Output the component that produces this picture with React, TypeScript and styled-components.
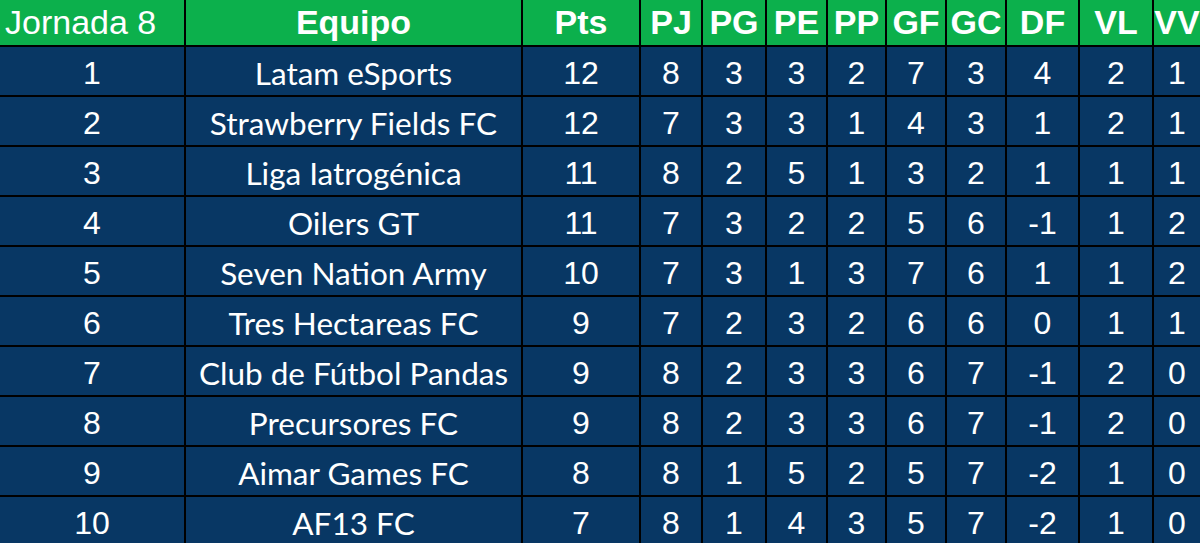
import * as React from 'react'
import styled, { createGlobalStyle } from 'styled-components';

const GlobalStyle = createGlobalStyle`
  html, body {
    margin: 0;
    padding: 0;
    overflow: hidden;
    background: #000;
  }
`

type Team = {
    pos: number
    name: string
    stats: number[] // Pts PJ PG PE PP GF GC DF VL VV
}

const teams: Team[] = [
    { pos: 1, name: 'Latam eSports', stats: [12, 8, 3, 3, 2, 7, 3, 4, 2, 1] },
    { pos: 2, name: 'Strawberry Fields FC', stats: [12, 7, 3, 3, 1, 4, 3, 1, 2, 1] },
    { pos: 3, name: 'Liga Iatrogénica', stats: [11, 8, 2, 5, 1, 3, 2, 1, 1, 1] },
    { pos: 4, name: 'Oilers GT', stats: [11, 7, 3, 2, 2, 5, 6, -1, 1, 2] },
    { pos: 5, name: 'Seven Nation Army', stats: [10, 7, 3, 1, 3, 7, 6, 1, 1, 2] },
    { pos: 6, name: 'Tres Hectareas FC', stats: [9, 7, 2, 3, 2, 6, 6, 0, 1, 1] },
    { pos: 7, name: 'Club de Fútbol Pandas', stats: [9, 8, 2, 3, 3, 6, 7, -1, 2, 0] },
    { pos: 8, name: 'Precursores FC', stats: [9, 8, 2, 3, 3, 6, 7, -1, 2, 0] },
    { pos: 9, name: 'Aimar Games FC', stats: [8, 8, 1, 5, 2, 5, 7, -2, 1, 0] },
    { pos: 10, name: 'AF13 FC', stats: [7, 8, 1, 4, 3, 5, 7, -2, 1, 0] },
]

const columns = ['Pts', 'PJ', 'PG', 'PE', 'PP', 'GF', 'GC', 'DF', 'VL', 'VV']

const Table = styled.div`
  display: grid;
  grid-template-columns: 184px 335px 116px 60px 62px 59px 57px 58px 58px 71px 72px 46px;
  grid-template-rows: 45px;
  grid-auto-rows: 48px;
  gap: 2px;
  width: 1200px;
  background: #000;
`

const HeadCell = styled.div<{ $left?: boolean; $regular?: boolean }>`
  background: #0cb04c;
  color: #fff;
  font-family: "Liberation Sans", Arial, sans-serif;
  font-size: 34px;
  font-weight: ${p => (p.$regular ? 400 : 700)};
  line-height: 45px;
  white-space: nowrap;
  text-align: ${p => (p.$left ? 'left' : 'center')};
  padding-left: ${p => (p.$left ? '5px' : '0')};
`

const Cell = styled.div<{ $team?: boolean }>`
  background: #083764;
  color: #fff;
  font-family: ${p => (p.$team ? 'Lato, "Liberation Sans", sans-serif' : '"Liberation Sans", Arial, sans-serif')};
  font-size: ${p => (p.$team ? '31.5px' : '32px')};
  line-height: 48px;
  padding-top: 2px;
  white-space: nowrap;
  text-align: center;
  box-sizing: border-box;
`

export default function App() {
    return (
        <>
            <GlobalStyle />
            <Table>
                <HeadCell $left $regular>Jornada 8</HeadCell>
                <HeadCell>Equipo</HeadCell>
                {columns.map(c => (
                    <HeadCell key={c}>{c}</HeadCell>
                ))}
                {teams.map(t => (
                    <React.Fragment key={t.pos}>
                        <Cell>{t.pos}</Cell>
                        <Cell $team>{t.name}</Cell>
                        {t.stats.map((s, i) => (
                            <Cell key={i}>{s}</Cell>
                        ))}
                    </React.Fragment>
                ))}
            </Table>
        </>
    )
}
